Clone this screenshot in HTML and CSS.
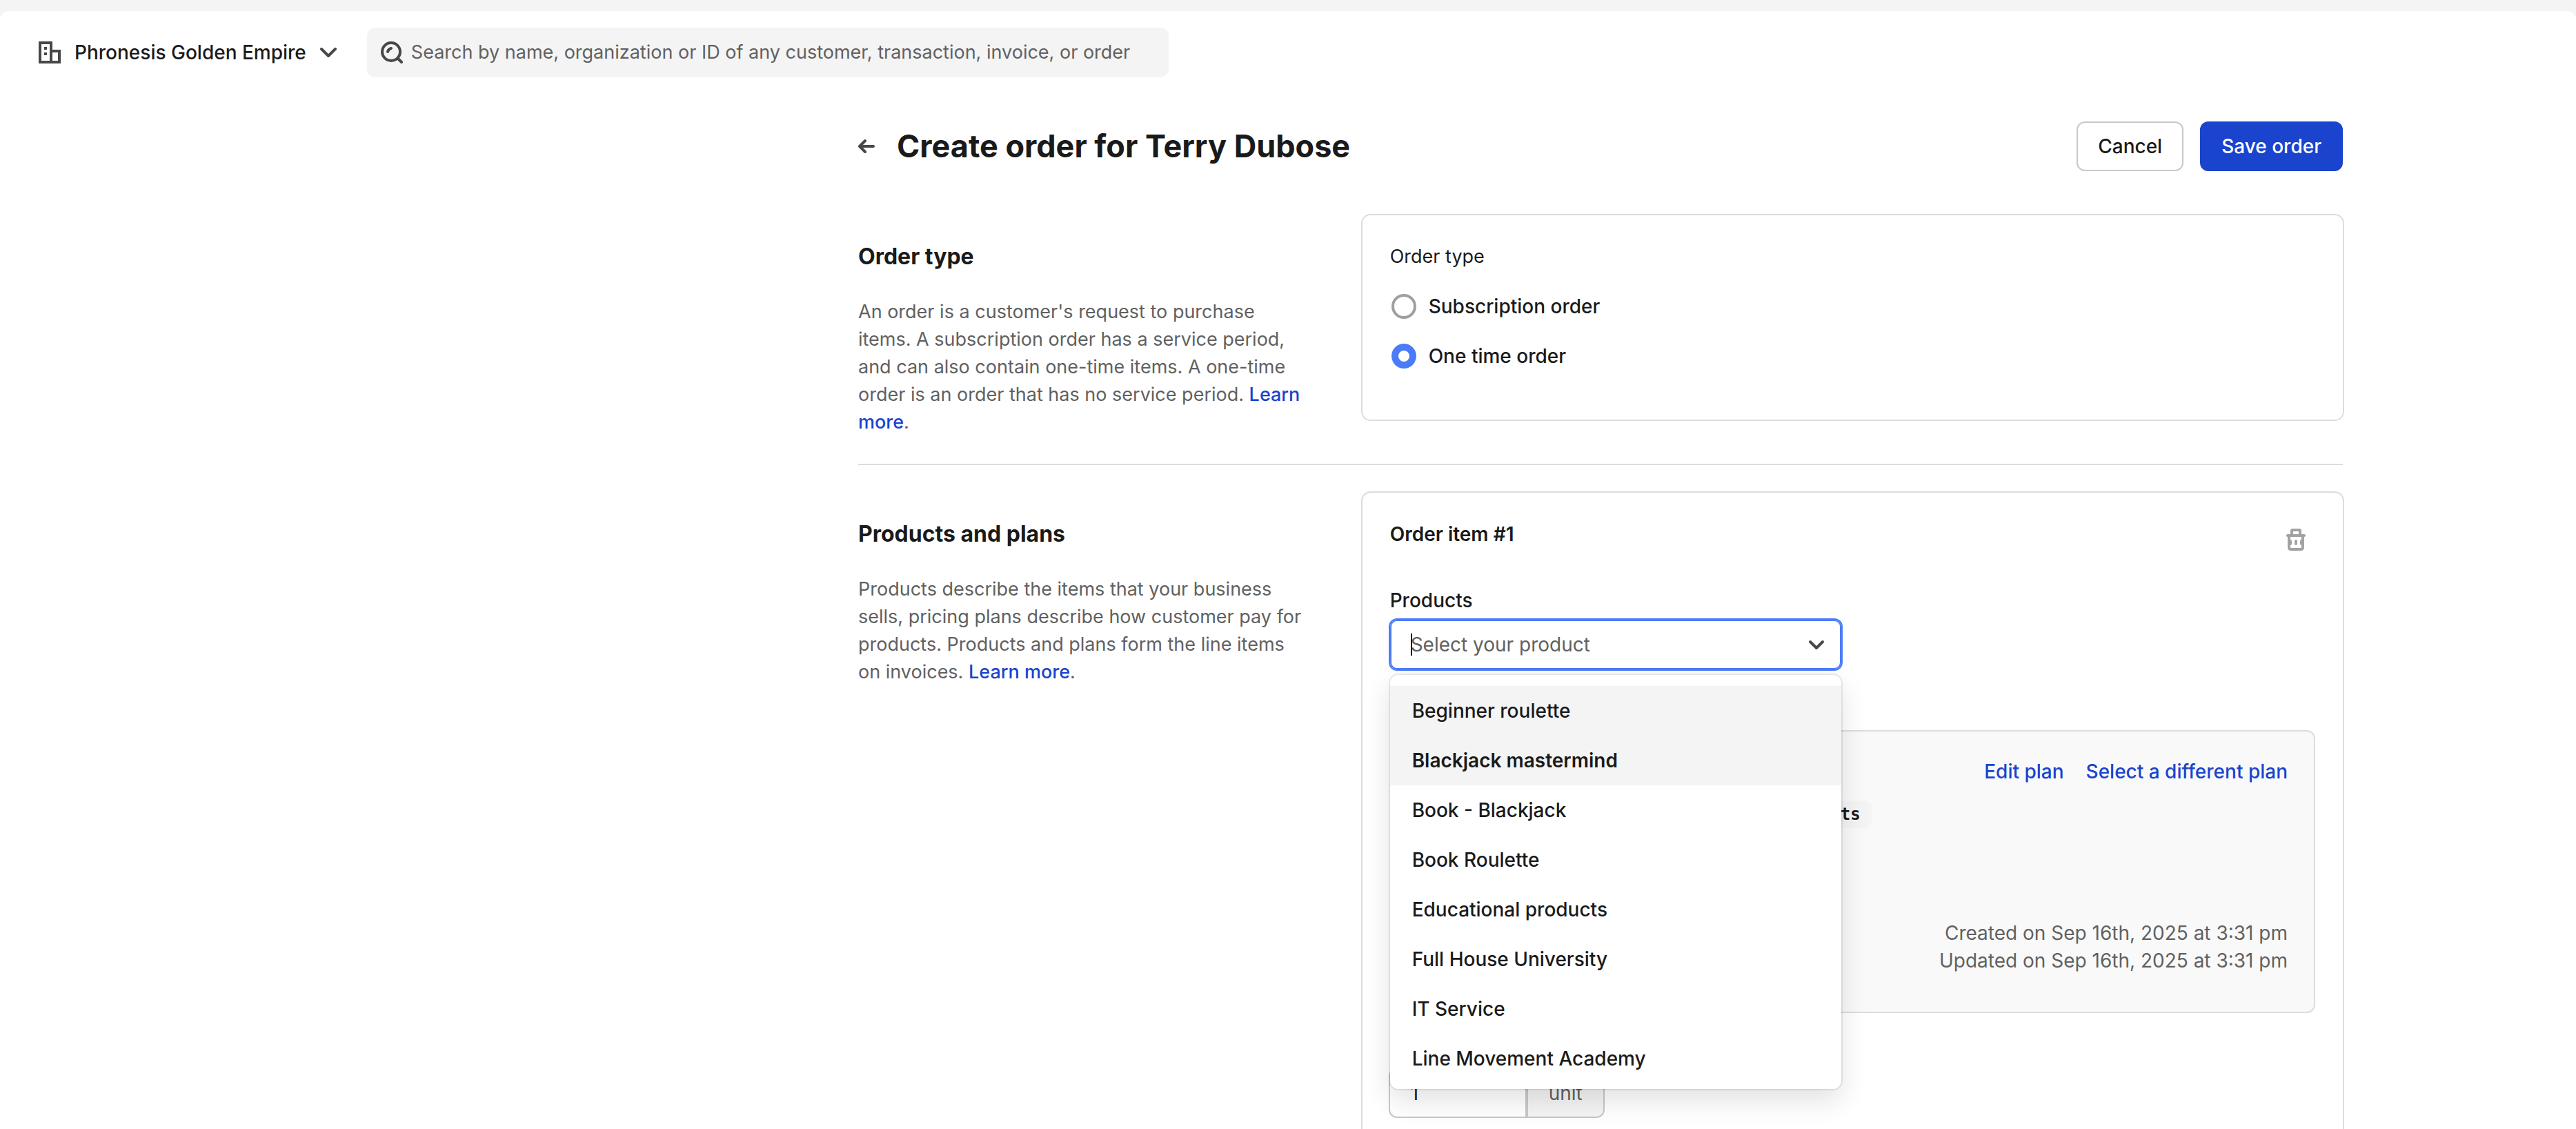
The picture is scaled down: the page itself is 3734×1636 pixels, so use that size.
FILE: index.html
```html
<!DOCTYPE html>
<html lang="en">
<head>
  <meta charset="utf-8">
  <meta name="viewport" content="width=device-width, initial-scale=1">
  <title>Create order for Terry Dubose</title>
  <link rel="stylesheet" href="styles.css">
</head>
<body>
  <div class="app">
    <header class="topbar">
      <button class="org-switcher" type="button">
        <svg class="icon" width="32" height="32" viewBox="0 0 32 32" fill="none" stroke="currentColor" stroke-width="4" aria-hidden="true">
          <path d="M2 2h16v28H2zM18 14h12v16H18"/>
          <path d="M10 8v4M10 16v4"/>
        </svg>
        <span>Phronesis Golden Empire</span>
        <svg class="icon" width="24" height="16" viewBox="0 0 24 16" fill="none" stroke="currentColor" stroke-width="4" stroke-linecap="round" stroke-linejoin="round" aria-hidden="true">
          <path d="M2 3l10 10L22 3"/>
        </svg>
      </button>
      <label class="search">
        <svg class="icon" width="32" height="32" viewBox="0 0 32 32" fill="none" stroke="currentColor" stroke-width="4" stroke-linecap="round" aria-hidden="true">
          <circle cx="15" cy="15" r="13"/>
          <path d="M25 25l5 5"/>
          <path d="M10 15q1-4 5-5"/>
        </svg>
        <input class="search-input" type="search" aria-label="Search" placeholder="Search by name, organization or ID of any customer, transaction, invoice, or order">
      </label>
    </header>

    <main class="page">
      <div class="page-body">
        <div class="page-header">
          <a class="back" href="#" aria-label="Back">
            <svg class="icon" width="24" height="24" viewBox="0 0 24 24" fill="none" stroke="currentColor" stroke-width="4" stroke-linecap="round" stroke-linejoin="round" aria-hidden="true">
              <path d="M22 12H2M10 4l-8 8 8 8"/>
            </svg>
          </a>
          <h1 class="page-title">Create order for Terry Dubose</h1>
          <button class="button" type="button">Cancel</button>
          <button class="button button-primary" type="submit">Save order</button>
        </div>

        <section class="section">
          <div class="intro">
            <h2 class="intro-title">Order type</h2>
            <p class="intro-text">An order is a customer's request to purchase items. A subscription order has a service period, and can also contain one-time items. A one-time order is an order that has no service period. <a class="link" href="#">Learn more</a>.</p>
          </div>
          <fieldset class="card radio-card">
            <div class="radio-title">Order type</div>
            <label class="radio-row"><input class="radio" type="radio" name="order-type">Subscription order</label>
            <label class="radio-row"><input class="radio" type="radio" name="order-type" checked>One time order</label>
          </fieldset>
        </section>

        <section class="section section-divided">
          <div class="intro">
            <h2 class="intro-title">Products and plans</h2>
            <p class="intro-text">Products describe the items that your business sells, pricing plans describe how customer pay for products. Products and plans form the line items on invoices. <a class="link" href="#">Learn more</a>.</p>
          </div>
          <div class="card item-card">
            <div class="item-header">
              <h3 class="item-title">Order item #1</h3>
              <button class="icon-button" type="button" aria-label="Remove order item">
                <svg width="28" height="32" viewBox="0 0 28 32" fill="none" stroke="currentColor" stroke-width="4" stroke-linecap="round" stroke-linejoin="round" aria-hidden="true">
                  <path d="M2 10h24M8 10V3q0-1 1-1h10q1 0 1 1v7"/>
                  <path d="M4 10v17q0 3 3 3h14q3 0 3-3V10"/>
                  <path d="M14 18v4M6 18v4M22 18v4"/>
                </svg>
              </button>
            </div>

            <div class="field">
              <label class="field-label" for="product">Products</label>
              <div class="combobox">
                <input class="combobox-input" id="product" type="text" role="combobox" aria-expanded="true" aria-controls="product-list" placeholder="Select your product">
                <span class="caret"></span>
                <svg class="icon" width="24" height="16" viewBox="0 0 24 16" fill="none" stroke="currentColor" stroke-width="4" stroke-linecap="round" stroke-linejoin="round" aria-hidden="true">
                  <path d="M3 4l9 9 9-9"/>
                </svg>
                <ul class="menu" id="product-list" role="listbox">
                  <li class="option option-active" role="option">Beginner roulette</li>
                  <li class="option option-active option-selected" role="option" aria-selected="true">Blackjack mastermind</li>
                  <li class="option" role="option">Book - Blackjack</li>
                  <li class="option" role="option">Book Roulette</li>
                  <li class="option" role="option">Educational products</li>
                  <li class="option" role="option">Full House University</li>
                  <li class="option" role="option">IT Service</li>
                  <li class="option" role="option">Line Movement Academy</li>
                </ul>
              </div>
            </div>

            <div class="plan">
              <div class="plan-actions">
                <a class="link" href="#">Edit plan</a>
                <a class="link" href="#">Select a different plan</a>
              </div>
              <div class="plan-tags"><code class="tag">ts</code></div>
              <div class="plan-dates">
                <div>Created on Sep 16th, 2025 at 3:31 pm</div>
                <div>Updated on Sep 16th, 2025 at 3:31 pm</div>
              </div>
            </div>

            <div class="quantity">
              <input class="quantity-input" type="text" inputmode="numeric" aria-label="Quantity" value="1">
              <span class="quantity-unit">unit</span>
            </div>
          </div>
        </section>
      </div>
    </main>
  </div>
</body>
</html>
```
FILE: styles.css
```css
:root {
  --text: #1a1a1a;
  --muted: #616161;
  --icon: #474747;
  --line: #dcdcdc;
  --control-line: #c8c8c8;
  --fill: #f4f4f4;
  --primary: #1a43ce;
  --focus: #4c7bf7;
}

* {
  box-sizing: border-box;
}

body {
  margin: 0;
  padding-top: 16px;
  height: 100vh;
  overflow: hidden;
  background: var(--fill);
  color: var(--text);
  font: 400 28px/40px Inter, "Liberation Sans", sans-serif;
}

h1, h2, h3, p, ul, fieldset {
  margin: 0;
  padding: 0;
  border: 0;
}

button, input {
  margin: 0;
  padding: 0;
  border: 0;
  background: none;
  color: inherit;
  font: inherit;
}

input::placeholder {
  color: var(--muted);
  opacity: 1;
}

.app {
  height: 100%;
  overflow: auto;
  scrollbar-width: none;
  background: #fff;
  border-radius: 12px 12px 0 0;
}

.icon {
  flex: none;
  color: var(--icon);
}

.link {
  color: var(--primary);
  font-weight: 500;
  text-decoration: none;
}

/* Top bar */

.topbar {
  display: flex;
  align-items: center;
  gap: 44px;
  padding: 24px 56px 0;
}

.org-switcher {
  display: flex;
  align-items: center;
  gap: 20px;
  font-weight: 500;
}

.search {
  display: flex;
  align-items: center;
  gap: 12px;
  flex: 0 1 1162px;
  height: 72px;
  padding: 0 20px;
  background: var(--fill);
  border-radius: 12px;
}

.search-input {
  flex: 1;
  min-width: 0;
  outline: 0;
  font-size: 27px;
}

/* Page */

.page {
  display: grid;
  grid-template-columns: minmax(24px, 1244fr) minmax(0, 2152px) minmax(24px, 338fr);
  padding: 64px 0;
}

.page-body {
  grid-column: 2;
}

.page-header {
  display: flex;
  align-items: center;
  gap: 24px;
  margin-bottom: 64px;
}

.back {
  display: flex;
  margin-right: 8px;
}

.page-title {
  flex: 1;
  font-size: 45px;
  line-height: 64px;
  font-weight: 700;
}

.button {
  height: 72px;
  padding: 0 29px;
  border: 2px solid var(--control-line);
  border-radius: 12px;
  background: #fff;
  font-weight: 500;
}

.button-primary {
  border-color: var(--primary);
  background: var(--primary);
  color: #fff;
}

.section {
  display: grid;
  grid-template-columns: 1fr 2fr;
  align-items: start;
  gap: 20px;
  padding-bottom: 40px;
}

.section-divided {
  padding-top: 40px;
  border-top: 2px solid var(--line);
}

.section:first-of-type {
  padding-bottom: 0;
}

.intro {
  padding: 40px 60px 40px 0;
}

.intro-title {
  margin-bottom: 40px;
  font-size: 32px;
  line-height: 40px;
  font-weight: 700;
}

.intro-text {
  color: var(--muted);
  font-size: 27px;
}

.card {
  min-width: 0;
  padding: 40px;
  border-radius: 12px;
  background: #fff;
  box-shadow: 0 0 0 2px var(--line);
}

/* Order type */

.radio-card {
  padding-bottom: 56px;
}

.radio-title {
  margin-bottom: 16px;
  font-size: 27px;
}

.radio-row {
  display: flex;
  align-items: center;
  gap: 18px;
  height: 72px;
  padding-left: 2px;
  font-weight: 500;
}

.radio {
  appearance: none;
  width: 36px;
  height: 36px;
  border: 4px solid #9f9f9f;
  border-radius: 50%;
}

.radio:checked {
  border: 10px solid var(--focus);
}

/* Order item */

.item-card {
  min-height: 1000px;
}

.item-header {
  display: flex;
  align-items: flex-start;
  justify-content: space-between;
  margin-bottom: 40px;
}

.item-title {
  font-size: 28px;
  line-height: 40px;
  font-weight: 600;
}

.icon-button {
  display: grid;
  place-items: center;
  width: 56px;
  height: 56px;
  color: #a2a2a2;
}

.field {
  width: 654px;
  max-width: 100%;
}

.field-label {
  display: block;
  margin-bottom: 8px;
  font-weight: 500;
}

.combobox {
  position: relative;
  display: flex;
  align-items: center;
  height: 72px;
  padding: 0 22px 0 28px;
  border: 2px solid var(--focus);
  border-radius: 10px;
  box-shadow: 0 0 0 2px var(--focus);
}

.combobox-input {
  flex: 1;
  min-width: 0;
  outline: 0;
}

.caret {
  position: absolute;
  left: 28px;
  width: 2px;
  height: 32px;
  background: #000;
}

.menu {
  position: absolute;
  z-index: 1;
  top: 78px;
  left: -2px;
  right: -2px;
  padding: 16px 0 8px;
  border-radius: 12px;
  background: #fff;
  box-shadow: 0 0 0 2px rgba(0, 0, 0, 0.08), 0 16px 40px rgba(0, 0, 0, 0.12);
  list-style: none;
}

.option {
  padding: 16px 32px;
  font-weight: 500;
}

.option-active {
  background: var(--fill);
}

.option-selected {
  font-weight: 600;
}

.plan {
  margin-top: 88px;
  padding: 38px 38px 54px 40px;
  border: 2px solid var(--line);
  border-radius: 12px;
  background: #f9f9f9;
}

.plan-actions {
  display: flex;
  justify-content: flex-end;
  gap: 32px;
}

.plan-tags {
  display: flex;
  justify-content: flex-end;
  width: 656px;
  max-width: 100%;
  margin: 22px 0 132px;
}

.tag {
  padding: 0 16px;
  border-radius: 12px;
  background: var(--fill);
  font: 700 24px/40px "DejaVu Sans Mono", monospace;
}

.plan-dates {
  color: var(--muted);
  text-align: right;
}

.quantity {
  display: flex;
  gap: 4px;
  margin-top: 82px;
  line-height: 68px;
}

.quantity-input,
.quantity-unit {
  height: 68px;
  padding: 0 30px;
  box-shadow: 0 0 0 2px var(--control-line);
}

.quantity-input {
  width: 196px;
  border-radius: 10px 0 0 10px;
}

.quantity-unit {
  border-radius: 0 10px 10px 0;
  background: var(--fill);
  color: var(--muted);
}
```
